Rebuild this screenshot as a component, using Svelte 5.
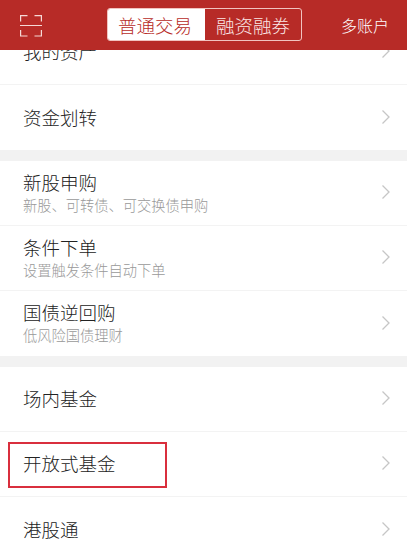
<script>
	const groups = [
		[
			{ title: '我的资产' },
			{ title: '资金划转' }
		],
		[
			{ title: '新股申购', sub: '新股、可转债、可交换债申购' },
			{ title: '条件下单', sub: '设置触发条件自动下单' },
			{ title: '国债逆回购', sub: '低风险国债理财' }
		],
		[
			{ title: '场内基金' },
			{ title: '开放式基金', marked: true },
			{ title: '港股通' }
		]
	];
</script>

<div class="page">
	<header class="topbar">
		<svg class="scan" width="22" height="22" viewBox="0 0 22 22" fill="none" stroke="#f6d9d6" stroke-width="1.2">
			<path d="M0.600 6.500V0.600H7.500M14.500 0.600H21.400V6.500M0 10.500H22M0.600 15V21H7.500M14.500 21H21.400V15" />
		</svg>
		<div class="tabs">
			<span class="tab active">普通交易</span>
			<span class="tab">融资融券</span>
		</div>
		<span class="accounts">多账户</span>
	</header>

	<main class="content">
		<div class="list">
			{#each groups as group}
				<section class="group">
					{#each group as item}
						<div class="row" class:with-sub={item.sub}>
							<div class="text">
								<div class="title">{item.title}</div>
								{#if item.sub}
									<div class="sub">{item.sub}</div>
								{/if}
							</div>
							<svg class="chevron" width="8" height="14" viewBox="0 0 8 14" fill="none" stroke="#c6c6c6" stroke-width="1.3">
								<path d="M0.500 0.500L7 7L0.500 13.500" />
							</svg>
							{#if item.marked}
								<div class="mark"></div>
							{/if}
						</div>
					{/each}
				</section>
			{/each}
		</div>
	</main>
</div>

<style>
	:global(body) {
		background: #fff;
	}

	.page {
		width: 407px;
		height: 560px;
		display: flex;
		flex-direction: column;
		overflow: hidden;
		font-family: "Noto Sans CJK SC", "Noto Sans", sans-serif;
		font-weight: 300;
	}

	.topbar {
		flex: none;
		height: 50px;
		background: #b72b27;
		display: flex;
		align-items: center;
		padding: 0 19px 0 20px;
		box-sizing: border-box;
		color: #fff;
	}

	.scan {
		flex: none;
		margin-top: 1px;
	}

	.tabs {
		display: flex;
		width: 195px;
		height: 33px;
		box-sizing: border-box;
		margin: 0 0 1px 65px;
		border: 1px solid #f1c4c0;
		border-radius: 3px;
		overflow: hidden;
	}

	.tab {
		flex: 0 0 96px;
		display: flex;
		align-items: center;
		justify-content: center;
		font-size: 18.500px;
		color: #fbe9e7;
	}

	.tab.active {
		flex-basis: 97px;
		background: #fff;
		color: #b72b27;
		padding-right: 3px;
		box-sizing: border-box;
	}

	.accounts {
		font-size: 16px;
		margin: 0 -1px 1px auto;
	}

	.content {
		flex: 1;
		overflow: hidden;
	}

	.list {
		margin-top: -30px;
	}

	.group {
		border-bottom: 11px solid #f2f2f2;
	}

	.row {
		position: relative;
		height: 65px;
		box-sizing: border-box;
		display: flex;
		align-items: center;
		justify-content: space-between;
		padding: 0 17px 2px 23px;
		border-bottom: 1px solid #f3f3f3;
	}

	.row:last-child {
		border-bottom: none;
	}

	.title {
		font-size: 18.500px;
		line-height: 24px;
		color: #222;
	}

	.sub {
		font-size: 14.250px;
		line-height: 22px;
		color: #999;
	}

	.with-sub .text {
		margin-top: 1px;
	}

	.mark {
		position: absolute;
		left: 8px;
		top: 10px;
		width: 159px;
		height: 46px;
		box-sizing: border-box;
		border: 2px solid #d92f3d;
	}
</style>
